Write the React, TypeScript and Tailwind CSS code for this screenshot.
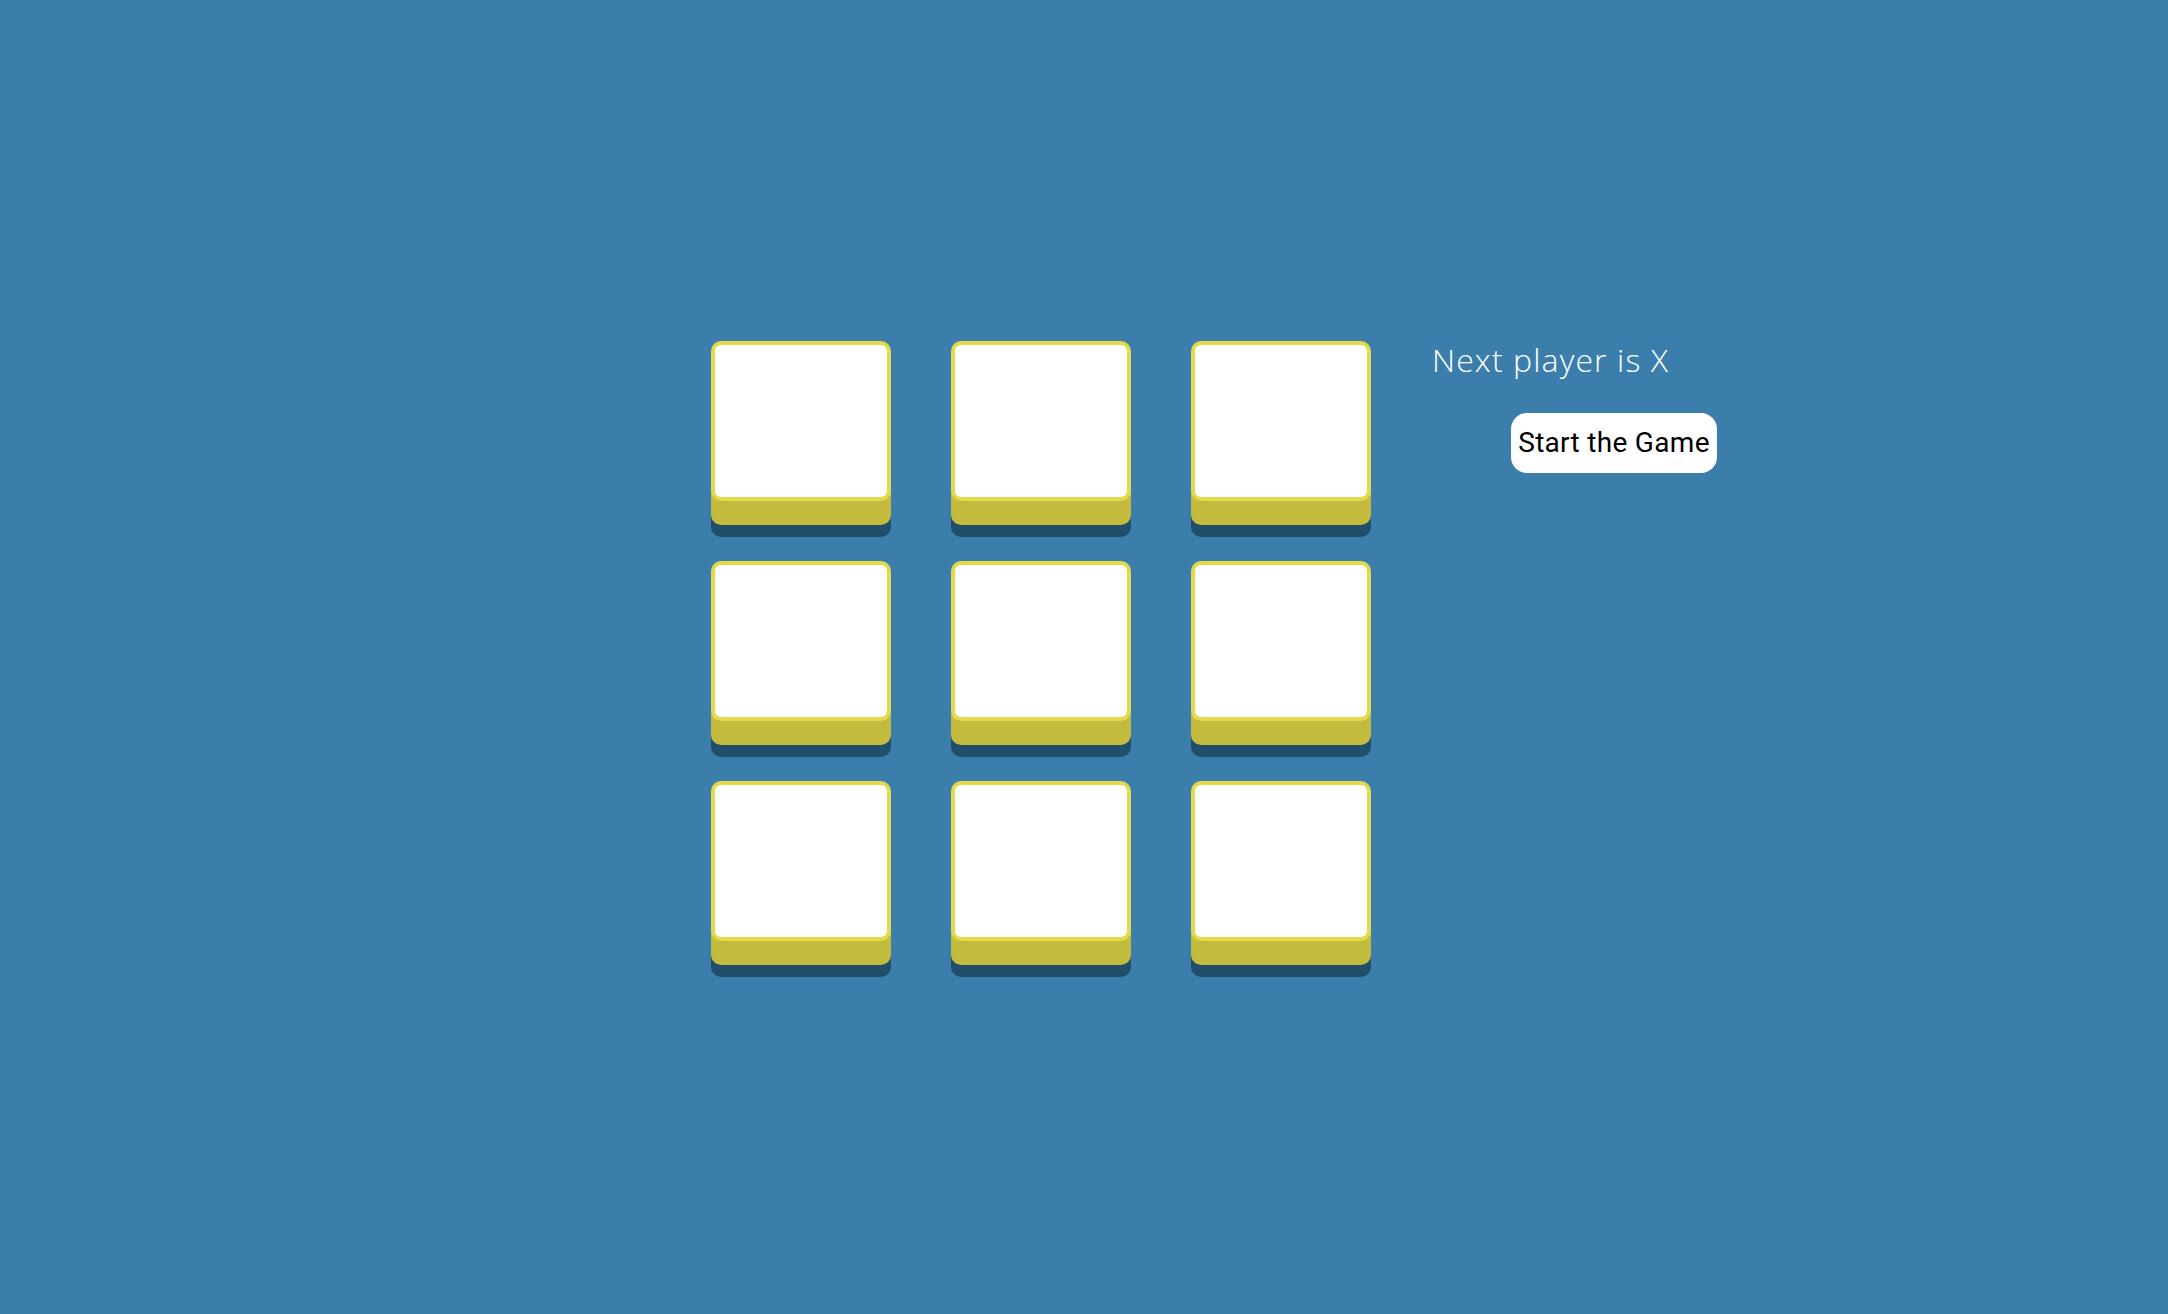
import React from "react";

export default function App() {
  const cells = Array.from({ length: 9 });
  return (
    <div className="w-full h-[1314px] bg-[#3b7eab] overflow-hidden">
      <div className="flex items-start pl-[711px] pt-[341px]">
        <div className="grid grid-cols-3 gap-x-[60px] gap-y-[60px]">
          {cells.map((_, i) => (
            <div
              key={i}
              className="w-[180px] h-[160px] bg-white border-4 border-[#e3d94a] rounded-[10px] shadow-[0_24px_0_#c2bb3e,0_36px_0_#204e6b]"
            />
          ))}
        </div>
        <div className="ml-[61px] flex flex-col">
          <div
            className="text-white text-[32px] font-light leading-[40px] -mt-[1px] tracking-[1.1px]"
            style={{ fontFamily: '"Open Sans", Lato, sans-serif' }}
          >
            Next player is X
          </div>
          <button
            className="ml-[79px] mt-[33px] w-[206px] h-[60px] bg-white rounded-[16px] text-black text-[28px] leading-none flex items-center justify-center tracking-[0.3px]"
            style={{ fontFamily: 'Roboto, "Liberation Sans", Arial, sans-serif' }}
          >
            Start the Game
          </button>
        </div>
      </div>
    </div>
  );
}
